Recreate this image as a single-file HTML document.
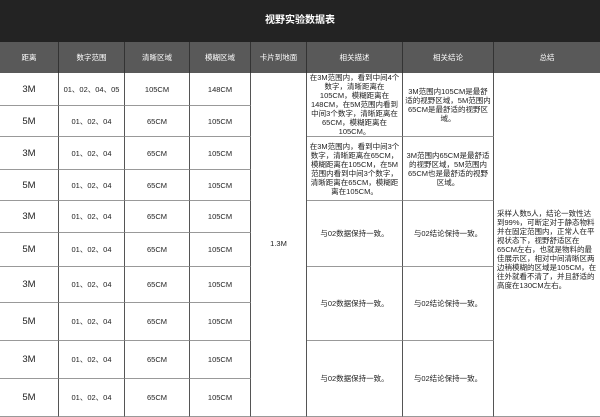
<!DOCTYPE html><html><head><meta charset="utf-8"><style>
body{margin:0;width:600px;height:417px;background:#fff;position:relative;overflow:hidden;font-family:"Liberation Sans","Noto Sans CJK SC",sans-serif;color:#222}
.t{position:absolute;left:0;top:0;width:600px;height:42px;background:#232323;color:#fff;font-size:10px;font-weight:bold;text-align:center;line-height:42px}
.h{position:absolute;top:42px;height:31px;background:#595959;color:#fff;font-size:7.5px;display:flex;align-items:center;justify-content:center;border-right:1px solid #333;box-sizing:border-box}
.c{position:absolute;display:flex;align-items:center;justify-content:center;text-align:center;border-right:1px solid #555;border-bottom:1px solid #999;box-sizing:border-box;font-size:7.5px;line-height:9px}
.big{font-size:9.5px}
</style></head><body>
<div class="t">视野实验数据表</div>
<div class="h" style="left:0;width:59px">距离</div>
<div class="h" style="left:59px;width:66px">数字范围</div>
<div class="h" style="left:125px;width:65px">清晰区域</div>
<div class="h" style="left:190px;width:61px">模糊区域</div>
<div class="h" style="left:251px;width:56px">卡片到地面</div>
<div class="h" style="left:307px;width:96px">相关描述</div>
<div class="h" style="left:403px;width:91px">相关结论</div>
<div class="h" style="left:494px;width:106px;border-right:none">总结</div>
<div id="rows"></div>
<div class="c" style="left:251px;top:73px;width:56px;height:344px;align-items:flex-start;padding-top:166px">1.3M</div>
<div class="c" style="left:307px;top:73px;width:96px;height:64px;padding:0 2px">在3M范围内，看到中间4个数字，清晰距离在105CM，模糊距离在148CM，在5M范围内看到中间3个数字，清晰距离在65CM，模糊距离在105CM。</div>
<div class="c" style="left:403px;top:73px;width:91px;height:64px;padding:0 2px">3M范围内105CM是最舒适的视野区域，5M范围内65CM是最舒适的视野区域。</div>
<div class="c" style="left:307px;top:137px;width:96px;height:64px;padding:0 2px">在3M范围内，看到中间3个数字，清晰距离在65CM，模糊距离在105CM，在5M范围内看到中间3个数字，清晰距离在65CM，模糊距离在105CM。</div>
<div class="c" style="left:403px;top:137px;width:91px;height:64px;padding:0 2px">3M范围内65CM是最舒适的视野区域，5M范围内65CM也是最舒适的视野区域。</div>
<div class="c" style="left:307px;top:201px;width:96px;height:66px">与02数据保持一致。</div>
<div class="c" style="left:403px;top:201px;width:91px;height:66px">与02结论保持一致。</div>
<div class="c" style="left:307px;top:267px;width:96px;height:74px">与02数据保持一致。</div>
<div class="c" style="left:403px;top:267px;width:91px;height:74px">与02结论保持一致。</div>
<div class="c" style="left:307px;top:341px;width:96px;height:76px">与02数据保持一致。</div>
<div class="c" style="left:403px;top:341px;width:91px;height:76px">与02结论保持一致。</div>
<div class="c" style="left:494px;top:73px;width:106px;height:344px;border-right:none;align-items:flex-start;justify-content:flex-start;text-align:left;padding:136px 3px 0 3px">采样人数5人，结论一致性达到99%，可断定对于静态物料并在固定范围内，正常人在平视状态下，视野舒适区在65CM左右，也就是物料的最佳展示区，相对中间清晰区两边稍模糊的区域是105CM，在往外就看不清了，并且舒适的高度在130CM左右。</div>
<script>
var ys=[73,106,137,170,201,233,267,303,341,379,417];
var h='';
for(var i=0;i<10;i++){var y=ys[i],hh=ys[i+1]-y;
var d=(i%2==0)?'3M':'5M';var n=i==0?'01、02、04、05':'01、02、04';var a=i==0?'105CM':'65CM';var b=i==0?'148CM':'105CM';
var s='top:'+y+'px;height:'+hh+'px;';
h+='<div class="c big" style="left:0;width:59px;'+s+'">'+d+'</div>';
h+='<div class="c" style="left:59px;width:66px;'+s+'">'+n+'</div>';
h+='<div class="c" style="left:125px;width:65px;'+s+'">'+a+'</div>';
h+='<div class="c" style="left:190px;width:61px;'+s+'">'+b+'</div>';}
document.getElementById('rows').innerHTML=h;
</script>
</body></html>
